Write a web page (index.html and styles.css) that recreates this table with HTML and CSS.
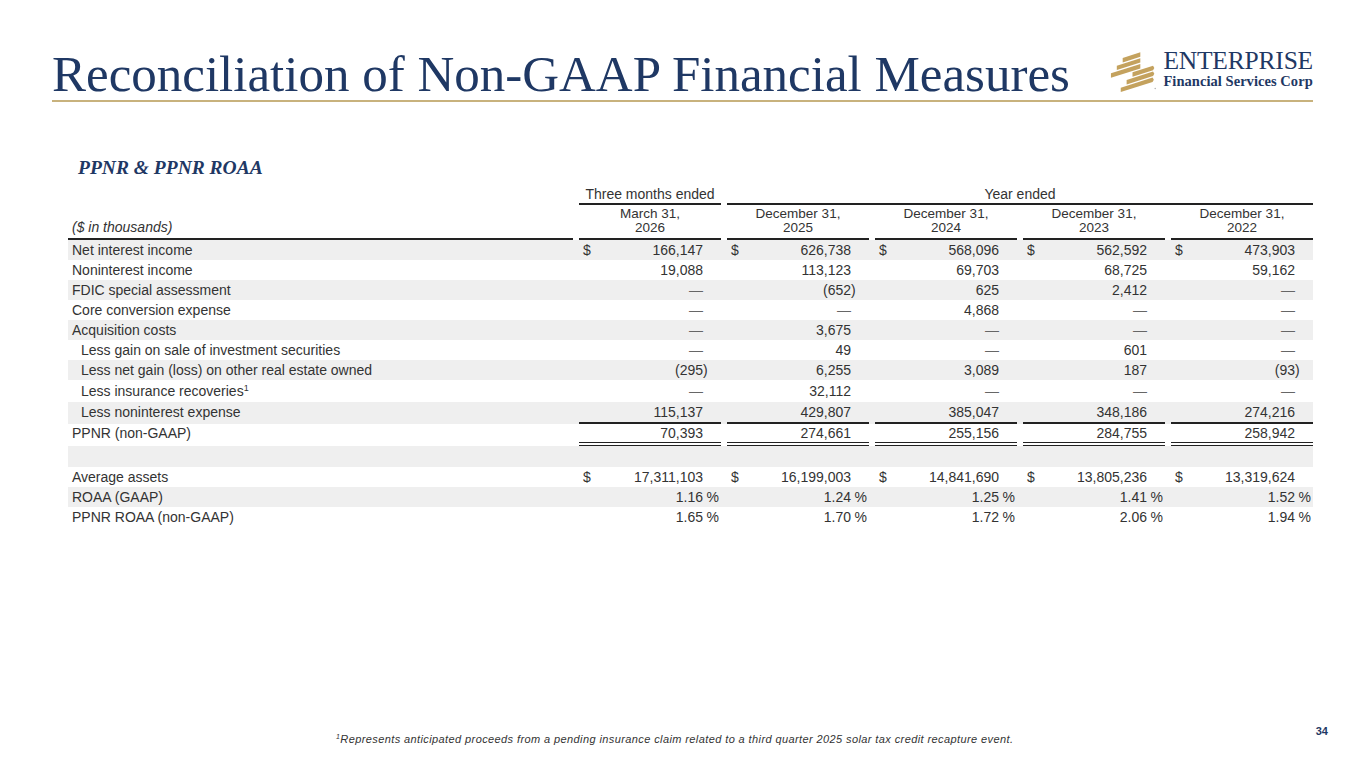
FILE: index.html
```html
<!DOCTYPE html>
<html lang="en">
<head>
<meta charset="utf-8">
<title>Reconciliation of Non-GAAP Financial Measures</title>
<link rel="stylesheet" href="styles.css">
</head>
<body>
<header class="header">
  <h1 class="title">Reconciliation of Non-GAAP Financial Measures</h1>
  <div class="logo">
    <svg class="logo-mark" width="47" height="42" viewBox="0 0 48 47" preserveAspectRatio="none" aria-hidden="true">
      <g fill="#c4a25e">
        <polygon points="14,7.8 32,1.5 32,6.5 14,12.8"/>
        <polygon points="8,16.4 32,8 32,13 8,21.4"/>
        <polygon points="2,25 32,14.5 32,19.5 2,30"/>
        <polygon points="24,23.8 45,16.45 46.3,18.9 45,21.45 24,28.8"/>
        <polygon points="18,32.4 45,22.95 46.3,25.4 45,27.95 18,37.4"/>
        <polygon points="12,41 44.5,29.6 45.8,32.1 44.5,34.6 12,46"/>
      </g>
      <circle cx="47.2" cy="42" r="0.8" fill="#b5b5b5"/>
    </svg>
    <div class="logo-text">
      <div class="logo-name">ENTERPRISE</div>
      <div class="logo-sub">Financial Services Corp</div>
    </div>
  </div>
</header>

<main class="content">
  <h2 class="subtitle">PPNR &amp; PPNR ROAA</h2>

  <div class="table">
    <div class="row hrow1">
      <div></div>
      <div class="hspan">Three months ended</div>
      <div class="hspan span4">Year ended</div>
    </div>
    <div class="row hrow2">
      <div class="hlbl">($ in thousands)</div>
      <div class="hdate"><span class="hl">March 31,</span><span class="hl">2026</span></div>
      <div class="hdate"><span class="hl">December 31,</span><span class="hl">2025</span></div>
      <div class="hdate"><span class="hl">December 31,</span><span class="hl">2024</span></div>
      <div class="hdate"><span class="hl">December 31,</span><span class="hl">2023</span></div>
      <div class="hdate"><span class="hl">December 31,</span><span class="hl">2022</span></div>
    </div>

    <div class="row shade">
      <div class="lbl">Net interest income</div>
      <div class="c"><span class="cur">$</span><span class="n">166,147</span><span class="s"></span></div>
      <div class="c"><span class="cur">$</span><span class="n">626,738</span><span class="s"></span></div>
      <div class="c"><span class="cur">$</span><span class="n">568,096</span><span class="s"></span></div>
      <div class="c"><span class="cur">$</span><span class="n">562,592</span><span class="s"></span></div>
      <div class="c"><span class="cur">$</span><span class="n">473,903</span><span class="s"></span></div>
    </div>
    <div class="row">
      <div class="lbl">Noninterest income</div>
      <div class="c"><span class="n">19,088</span><span class="s"></span></div>
      <div class="c"><span class="n">113,123</span><span class="s"></span></div>
      <div class="c"><span class="n">69,703</span><span class="s"></span></div>
      <div class="c"><span class="n">68,725</span><span class="s"></span></div>
      <div class="c"><span class="n">59,162</span><span class="s"></span></div>
    </div>
    <div class="row shade">
      <div class="lbl">FDIC special assessment</div>
      <div class="c"><span class="n dash">—</span><span class="s"></span></div>
      <div class="c"><span class="n">(652</span><span class="s">)</span></div>
      <div class="c"><span class="n">625</span><span class="s"></span></div>
      <div class="c"><span class="n">2,412</span><span class="s"></span></div>
      <div class="c"><span class="n dash">—</span><span class="s"></span></div>
    </div>
    <div class="row">
      <div class="lbl">Core conversion expense</div>
      <div class="c"><span class="n dash">—</span><span class="s"></span></div>
      <div class="c"><span class="n dash">—</span><span class="s"></span></div>
      <div class="c"><span class="n">4,868</span><span class="s"></span></div>
      <div class="c"><span class="n dash">—</span><span class="s"></span></div>
      <div class="c"><span class="n dash">—</span><span class="s"></span></div>
    </div>
    <div class="row shade">
      <div class="lbl">Acquisition costs</div>
      <div class="c"><span class="n dash">—</span><span class="s"></span></div>
      <div class="c"><span class="n">3,675</span><span class="s"></span></div>
      <div class="c"><span class="n dash">—</span><span class="s"></span></div>
      <div class="c"><span class="n dash">—</span><span class="s"></span></div>
      <div class="c"><span class="n dash">—</span><span class="s"></span></div>
    </div>
    <div class="row">
      <div class="lbl ind">Less gain on sale of investment securities</div>
      <div class="c"><span class="n dash">—</span><span class="s"></span></div>
      <div class="c"><span class="n">49</span><span class="s"></span></div>
      <div class="c"><span class="n dash">—</span><span class="s"></span></div>
      <div class="c"><span class="n">601</span><span class="s"></span></div>
      <div class="c"><span class="n dash">—</span><span class="s"></span></div>
    </div>
    <div class="row shade">
      <div class="lbl ind">Less net gain (loss) on other real estate owned</div>
      <div class="c"><span class="n">(295</span><span class="s">)</span></div>
      <div class="c"><span class="n">6,255</span><span class="s"></span></div>
      <div class="c"><span class="n">3,089</span><span class="s"></span></div>
      <div class="c"><span class="n">187</span><span class="s"></span></div>
      <div class="c"><span class="n">(93</span><span class="s">)</span></div>
    </div>
    <div class="row tall">
      <div class="lbl ind">Less insurance recoveries<sup class="fn">1</sup></div>
      <div class="c"><span class="n dash">—</span><span class="s"></span></div>
      <div class="c"><span class="n">32,112</span><span class="s"></span></div>
      <div class="c"><span class="n dash">—</span><span class="s"></span></div>
      <div class="c"><span class="n dash">—</span><span class="s"></span></div>
      <div class="c"><span class="n dash">—</span><span class="s"></span></div>
    </div>
    <div class="row shade ul">
      <div class="lbl ind">Less noninterest expense</div>
      <div class="c"><span class="n">115,137</span><span class="s"></span></div>
      <div class="c"><span class="n">429,807</span><span class="s"></span></div>
      <div class="c"><span class="n">385,047</span><span class="s"></span></div>
      <div class="c"><span class="n">348,186</span><span class="s"></span></div>
      <div class="c"><span class="n">274,216</span><span class="s"></span></div>
    </div>
    <div class="row dbl">
      <div class="lbl">PPNR (non-GAAP)</div>
      <div class="c"><span class="n">70,393</span><span class="s"></span></div>
      <div class="c"><span class="n">274,661</span><span class="s"></span></div>
      <div class="c"><span class="n">255,156</span><span class="s"></span></div>
      <div class="c"><span class="n">284,755</span><span class="s"></span></div>
      <div class="c"><span class="n">258,942</span><span class="s"></span></div>
    </div>
    <div class="row shade spacer"></div>
    <div class="row">
      <div class="lbl">Average assets</div>
      <div class="c"><span class="cur">$</span><span class="n">17,311,103</span><span class="s"></span></div>
      <div class="c"><span class="cur">$</span><span class="n">16,199,003</span><span class="s"></span></div>
      <div class="c"><span class="cur">$</span><span class="n">14,841,690</span><span class="s"></span></div>
      <div class="c"><span class="cur">$</span><span class="n">13,805,236</span><span class="s"></span></div>
      <div class="c"><span class="cur">$</span><span class="n">13,319,624</span><span class="s"></span></div>
    </div>
    <div class="row shade">
      <div class="lbl">ROAA (GAAP)</div>
      <div class="c"><span class="n">1.16</span><span class="s pct">%</span></div>
      <div class="c"><span class="n">1.24</span><span class="s pct">%</span></div>
      <div class="c"><span class="n">1.25</span><span class="s pct">%</span></div>
      <div class="c"><span class="n">1.41</span><span class="s pct">%</span></div>
      <div class="c"><span class="n">1.52</span><span class="s pct">%</span></div>
    </div>
    <div class="row">
      <div class="lbl">PPNR ROAA (non-GAAP)</div>
      <div class="c"><span class="n">1.65</span><span class="s pct">%</span></div>
      <div class="c"><span class="n">1.70</span><span class="s pct">%</span></div>
      <div class="c"><span class="n">1.72</span><span class="s pct">%</span></div>
      <div class="c"><span class="n">2.06</span><span class="s pct">%</span></div>
      <div class="c"><span class="n">1.94</span><span class="s pct">%</span></div>
    </div>
  </div>
</main>

<footer class="footer">
  <p class="note"><sup class="fn">1</sup>Represents anticipated proceeds from a pending insurance claim related to a third quarter 2025 solar tax credit recapture event.</p>
  <div class="page">34</div>
</footer>
</body>
</html>
```
FILE: styles.css
```css
html, body {
  margin: 0;
  padding: 0;
}
body {
  width: 1365px;
  height: 768px;
  overflow: hidden;
  background: #ffffff;
  color: #333333;
  font-family: "Liberation Sans", Arial, sans-serif;
  display: flex;
  flex-direction: column;
}

/* ---------- header ---------- */
.header {
  margin: 0 52px;
  height: 100px;
  display: flex;
  justify-content: space-between;
  align-items: flex-end;
  border-bottom: 2px solid #c8b27d;
}
.title {
  margin: 0;
  font-family: "Liberation Serif", "Times New Roman", serif;
  font-weight: normal;
  font-size: 51px;
  line-height: 51px;
  color: #1f3864;
  white-space: nowrap;
}
.logo {
  display: flex;
  align-items: flex-end;
  margin-bottom: 7px;
}
.logo-mark {
  display: block;
  margin-right: 7px;
}
.logo-text {
  font-family: "Liberation Serif", "Times New Roman", serif;
  color: #1f3864;
  margin-bottom: 3px;
}
.logo-name {
  font-size: 25.5px;
  line-height: 20px;
  letter-spacing: -0.2px;
}
.logo-sub {
  margin-top: 2px;
  font-size: 14.5px;
  line-height: 17px;
  font-weight: bold;
  letter-spacing: 0.05px;
}

/* ---------- content ---------- */
.content {
  flex: 1;
  padding: 0 52px 0 68px;
}
.subtitle {
  margin: 56px 0 0 10px;
  font-family: "Liberation Serif", "Times New Roman", serif;
  font-style: italic;
  font-weight: bold;
  font-size: 19.5px;
  line-height: 20px;
  color: #1f3864;
}
.table {
  margin-top: 7px;
  width: 1245px;
  font-size: 14px;
}
.row {
  display: grid;
  grid-template-columns: 505px repeat(5, 142px);
  column-gap: 6px;
  min-height: 20px;
  line-height: 20px;
}
.shade {
  background: #efefef;
}
.tall {
  line-height: 22px;
}
.dbl {
  line-height: 18px;
}
.spacer {
  height: 21px;
}
.lbl {
  padding-left: 4px;
  white-space: nowrap;
}
.ind {
  padding-left: 13px;
}
.c {
  display: flex;
  padding-left: 4px;
}
.n {
  flex: 1;
  text-align: right;
  white-space: nowrap;
}
.dash {
  color: #666666;
}
.s {
  width: 18px;
  flex: none;
}
.s.pct {
  text-align: right;
  padding-right: 2px;
  width: 16px;
}
.ul .c {
  border-bottom: 2px solid #222222;
}
.dbl .c {
  border-bottom: 4px double #222222;
}
.fn {
  font-size: 9px;
  line-height: 0;
  vertical-align: 5px;
}

/* header rows */
.hrow1 {
  line-height: 18px;
}
.hspan {
  text-align: center;
  border-bottom: 2px solid #222222;
}
.span4 {
  grid-column: 3 / span 4;
}
.hlbl {
  display: flex;
  align-items: flex-end;
  padding: 0 0 4px 4px;
  font-style: italic;
  line-height: 14px;
  border-bottom: 2px solid #222222;
}
.hdate {
  display: flex;
  flex-direction: column;
  align-items: center;
  padding: 2px 0 3px;
  font-size: 13.5px;
  line-height: 14px;
  border-bottom: 2px solid #222222;
}
.hl {
  display: block;
}

/* ---------- footer ---------- */
.footer {
  height: 44px;
  display: flex;
  align-items: flex-start;
  padding: 0 37px 0 336px;
}
.note {
  margin: 8px 0 0;
  font-size: 11px;
  line-height: 14px;
  font-style: italic;
  letter-spacing: 0.4px;
  color: #333333;
  white-space: nowrap;
}
.note .fn {
  font-size: 7px;
  vertical-align: 4px;
}
.page {
  margin-left: auto;
  font-size: 11px;
  line-height: 14px;
  font-weight: bold;
  color: #1f3864;
}
```
